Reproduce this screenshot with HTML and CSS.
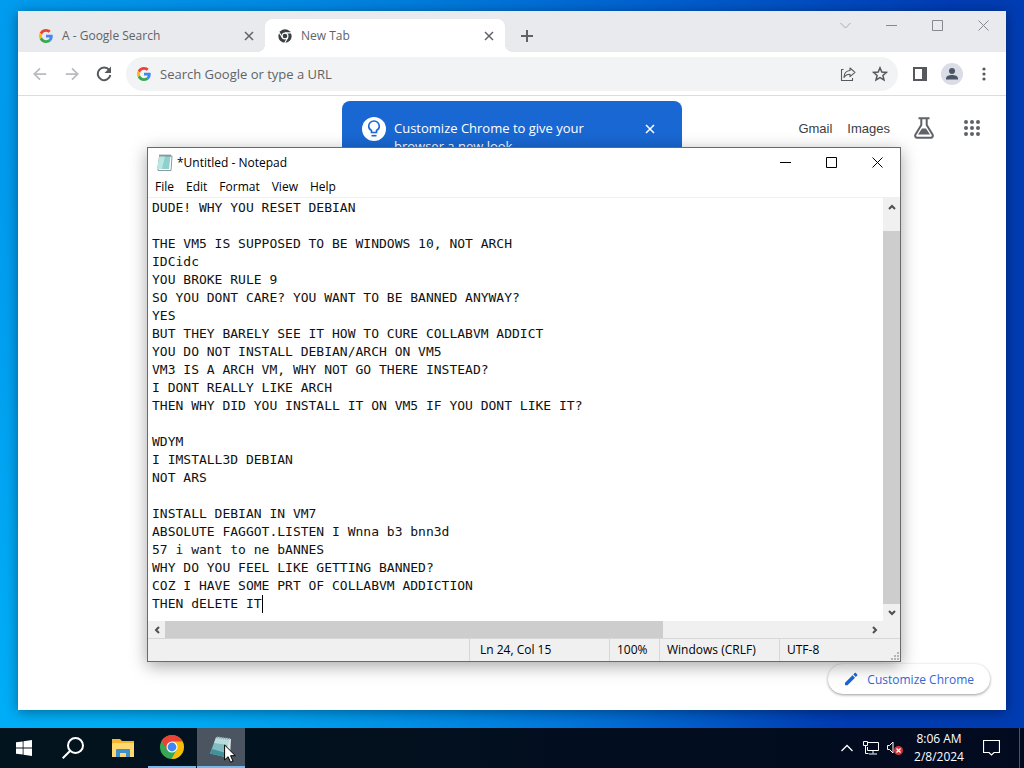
FILE: index.html
```html
<!DOCTYPE html>
<html lang="en">
<head>
  <meta charset="UTF-8" />
  <meta name="viewport" content="width=device-width, initial-scale=1.0" />
  <title>Desktop</title>
  <link rel="stylesheet" href="styles.css">
</head>
<body>

  <svg class="sprite" aria-hidden="true">
    <symbol id="google" viewBox="0 0 48 48">
      <path fill="#EA4335" d="M24 9.5c3.5 0 6.700 1.200 9.200 3.600l6.900-6.900C35.900 2.400 30.500 0 24 0 14.600 0 6.500 5.400 2.600 13.200l8 6.200C12.400 13.700 17.700 9.500 24 9.500z"/>
      <path fill="#4285F4" d="M47 24.600c0-1.600-.2-3.100-.4-4.600H24v9h12.900c-.6 3-2.200 5.500-4.700 7.200l7.700 6C44.400 38 47 31.800 47 24.600z"/>
      <path fill="#FBBC05" d="M10.500 28.600c-.5-1.500-.8-3-.8-4.600s.3-3.100.8-4.600l-8-6.200C.9 16.500 0 20.100 0 24s.9 7.500 2.600 10.800l7.900-6.200z"/>
      <path fill="#34A853" d="M24 48c6.500 0 11.900-2.100 15.900-5.800l-7.700-6c-2.200 1.500-4.900 2.300-8.200 2.300-6.300 0-11.600-4.200-13.500-9.900l-8 6.200C6.500 42.600 14.600 48 24 48z"/>
    </symbol>
    <symbol id="cross" viewBox="0 0 10 10">
      <path d="M1 1l8 8M9 1l-8 8" fill="none" stroke="currentColor" stroke-width="1.500"/>
    </symbol>
    <symbol id="window-close" viewBox="0 0 11 11">
      <path d="M.5.5l10 10M10.500.5l-10 10" fill="none" stroke="currentColor"/>
    </symbol>
    <symbol id="window-max" viewBox="0 0 11 11">
      <path d="M.5.5h10v10H.5z" fill="none" stroke="currentColor"/>
    </symbol>
    <symbol id="window-min" viewBox="0 0 11 11">
      <path d="M0 5.500h11" fill="none" stroke="currentColor"/>
    </symbol>
    <symbol id="chevron" viewBox="0 0 8 6">
      <path d="M1 5l3-3 3 3" fill="none" stroke="currentColor" stroke-width="2"/>
    </symbol>
  </svg>

  <main class="desktop">

    <!-- Chrome -->
    <section class="browser" aria-label="Google Chrome">
      <header class="tab-strip">
        <div class="tab">
          <svg class="favicon" viewBox="0 0 48 48"><use href="#google"/></svg>
          <span class="tab-title">A - Google Search</span>
          <button class="tab-close" aria-label="Close tab"><svg width="10" height="10"><use href="#cross"/></svg></button>
        </div>
        <div class="tab active">
          <svg class="favicon" viewBox="0 0 24 24">
            <circle cx="12" cy="12" r="11.500" fill="#3c4043"/>
            <circle cx="12" cy="12" r="5" fill="none" stroke="#fff" stroke-width="2"/>
            <path d="M12 6.500h11M7.300 14.700L1.800 5.500M16.700 14.700l-5.300 9.300" stroke="#fff" stroke-width="2"/>
          </svg>
          <span class="tab-title">New Tab</span>
          <button class="tab-close" aria-label="Close tab"><svg width="10" height="10"><use href="#cross"/></svg></button>
        </div>
        <button class="new-tab" aria-label="New tab">
          <svg width="12" height="12" viewBox="0 0 12 12"><path d="M6 0v12M0 6h12" stroke="currentColor" stroke-width="2"/></svg>
        </button>
        <div class="window-buttons">
          <button class="search-tabs" aria-label="Search tabs"><svg width="11" height="11" viewBox="0 0 11 11"><path d="M.5 3l5 5 5-5" fill="none" stroke="currentColor"/></svg></button>
          <button aria-label="Minimize"><svg width="11" height="11"><use href="#window-min"/></svg></button>
          <button aria-label="Maximize"><svg width="11" height="11"><use href="#window-max"/></svg></button>
          <button aria-label="Close"><svg width="11" height="11"><use href="#window-close"/></svg></button>
        </div>
      </header>

      <div class="toolbar">
        <button class="tool disabled" aria-label="Back">
          <svg width="14" height="14" viewBox="0 0 16 16"><path d="M15 8H2M8 1.500L1.500 8 8 14.500" fill="none" stroke="currentColor" stroke-width="2"/></svg>
        </button>
        <button class="tool disabled" aria-label="Forward">
          <svg width="14" height="14" viewBox="0 0 16 16"><path d="M1 8h13M8 1.500L14.500 8 8 14.500" fill="none" stroke="currentColor" stroke-width="2"/></svg>
        </button>
        <button class="tool" aria-label="Reload">
          <svg width="16" height="16" viewBox="0 0 16 16"><path d="M13.200 4.200A6.300 6.300 0 1 0 14.300 9" fill="none" stroke="currentColor" stroke-width="2"/><path d="M15 .5V7H8.500z" fill="currentColor"/></svg>
        </button>
        <div class="omnibox">
          <svg class="favicon" viewBox="0 0 48 48"><use href="#google"/></svg>
          <input type="text" aria-label="Address" placeholder="Search Google or type a URL">
          <button class="tool" aria-label="Share">
            <svg width="16" height="16" viewBox="0 0 16 16"><path d="M3.500 3.500H1.500v11h11V12M10 2l5 4.300-5 4.300V8.300C7.500 8.300 5.500 9 4 11.500 4 7.500 6.500 4.800 10 4.500z" fill="none" stroke="currentColor" stroke-width="1.100" stroke-linejoin="round"/></svg>
          </button>
          <button class="tool" aria-label="Bookmark this tab">
            <svg width="16" height="16" viewBox="0 0 16 16"><path d="M8 1.800l1.800 4.200 4.600.4-3.500 3 1.100 4.500-4-2.400-4 2.400 1.100-4.500-3.500-3 4.600-.4z" fill="none" stroke="currentColor" stroke-width="1.500"/></svg>
          </button>
        </div>
        <button class="tool" aria-label="Side panel">
          <svg width="14" height="14" viewBox="0 0 14 14"><path d="M1 1h12v12H1z" fill="none" stroke="currentColor" stroke-width="2"/><path d="M9 0h5v14H9z" fill="currentColor"/></svg>
        </button>
        <button class="tool" aria-label="Profile">
          <svg width="22" height="22" viewBox="0 0 22 22"><circle cx="11" cy="11" r="11" fill="#dadce6"/><circle cx="11" cy="8" r="3" fill="#4c5566"/><path d="M5 16.500v-1c0-2.500 3-3.500 6-3.500s6 1 6 3.500v1z" fill="#4c5566"/></svg>
        </button>
        <button class="tool" aria-label="Menu">
          <svg width="4" height="14" viewBox="0 0 4 14" fill="currentColor"><circle cx="2" cy="2" r="1.600"/><circle cx="2" cy="7" r="1.600"/><circle cx="2" cy="12" r="1.600"/></svg>
        </button>
      </div>

      <div class="page">
        <nav class="page-nav">
          <a href="#">Gmail</a>
          <a href="#">Images</a>
          <a href="#" class="app-link labs" aria-label="Search Labs">
            <svg width="20" height="22" viewBox="0 0 20 22"><path d="M4.500 1.200h11M7.300 1.500V8L1.500 17.500c-.9 1.600 0 3.200 1.800 3.200h13.400c1.800 0 2.700-1.600 1.800-3.200L12.700 8V1.500" fill="none" stroke="currentColor" stroke-width="2"/><path d="M8 11.500h4l4 6H4z" fill="currentColor"/></svg>
          </a>
          <a href="#" class="app-link" aria-label="Google apps">
            <svg width="16" height="16" viewBox="0 0 16 16" fill="currentColor"><circle cx="2" cy="2" r="2"/><circle cx="8" cy="2" r="2"/><circle cx="14" cy="2" r="2"/><circle cx="2" cy="8" r="2"/><circle cx="8" cy="8" r="2"/><circle cx="14" cy="8" r="2"/><circle cx="2" cy="14" r="2"/><circle cx="8" cy="14" r="2"/><circle cx="14" cy="14" r="2"/></svg>
          </a>
        </nav>
        <button class="customize">
          <svg width="14" height="14" viewBox="0 0 14 14" fill="currentColor"><path d="M1 10.700L8.500 3.200l2.500 2.500-7.500 7.500H1zM9.300 2.400l1.400-1.400c.3-.3.800-.3 1.100 0l1.400 1.400c.3.300.3.800 0 1.100l-1.400 1.400z"/></svg>
          Customize Chrome
        </button>
      </div>

      <div class="promo" role="dialog" aria-label="Tip">
        <svg class="promo-icon" viewBox="0 0 24 24"><circle cx="12" cy="12" r="12" fill="#fff"/><path d="M9.500 15.500v-2C7.500 12.500 6.700 11 6.700 9.300a5.300 5.300 0 0 1 10.600 0c0 1.700-.8 3.200-2.800 4.200v2z" fill="none" stroke="#1967d2" stroke-width="1.600"/><path d="M9.500 18.700h5" stroke="#1967d2" stroke-width="1.600"/></svg>
        <p>Customize Chrome to give your browser a new look</p>
        <button aria-label="Close tip"><svg width="10" height="10"><use href="#cross"/></svg></button>
      </div>
    </section>

    <!-- Notepad -->
    <section class="notepad" aria-label="Notepad">
      <header class="title-bar">
        <svg width="17" height="17" viewBox="0 0 17 17">
          <path d="M3.500 2H16l-1 14.500H2z" fill="#fff" stroke="#8a9a9a"/>
          <path d="M3.500 2H14.500L13 15H1z" fill="#8fd0cc"/>
          <path d="M3.500 2H9L6 15H1z" fill="#b8e6e2"/>
          <path d="M3.500 1.500h12" stroke="#50625f" stroke-width="2" stroke-dasharray="1 1"/>
        </svg>
        <h1>*Untitled - Notepad</h1>
        <div class="window-buttons">
          <button aria-label="Minimize"><svg width="11" height="11"><use href="#window-min"/></svg></button>
          <button aria-label="Maximize"><svg width="11" height="11"><use href="#window-max"/></svg></button>
          <button aria-label="Close"><svg width="11" height="11"><use href="#window-close"/></svg></button>
        </div>
      </header>
      <nav class="menu-bar">
        <button>File</button>
        <button>Edit</button>
        <button>Format</button>
        <button>View</button>
        <button>Help</button>
      </nav>
      <div class="editor">
        <div class="text-area">
          <textarea aria-label="Text editor" spellcheck="false" wrap="off">DUDE! WHY YOU RESET DEBIAN

THE VM5 IS SUPPOSED TO BE WINDOWS 10, NOT ARCH
IDCidc
YOU BROKE RULE 9
SO YOU DONT CARE? YOU WANT TO BE BANNED ANYWAY?
YES
BUT THEY BARELY SEE IT HOW TO CURE COLLABVM ADDICT
YOU DO NOT INSTALL DEBIAN/ARCH ON VM5
VM3 IS A ARCH VM, WHY NOT GO THERE INSTEAD?
I DONT REALLY LIKE ARCH
THEN WHY DID YOU INSTALL IT ON VM5 IF YOU DONT LIKE IT?

WDYM
I IMSTALL3D DEBIAN
NOT ARS

INSTALL DEBIAN IN VM7
ABSOLUTE FAGGOT.LISTEN I Wnna b3 bnn3d
57 i want to ne bANNES
WHY DO YOU FEEL LIKE GETTING BANNED?
COZ I HAVE SOME PRT OF COLLABVM ADDICTION
THEN dELETE IT</textarea>
          <span class="caret"></span>
        </div>
        <div class="scrollbar vertical">
          <button aria-label="Scroll up"><svg width="8" height="6"><use href="#chevron"/></svg></button>
          <div class="track"><div class="thumb"></div></div>
          <button class="down" aria-label="Scroll down"><svg width="8" height="6"><use href="#chevron"/></svg></button>
        </div>
        <div class="scrollbar horizontal">
          <button class="left" aria-label="Scroll left"><svg width="8" height="6"><use href="#chevron"/></svg></button>
          <div class="track"><div class="thumb"></div></div>
          <button class="right" aria-label="Scroll right"><svg width="8" height="6"><use href="#chevron"/></svg></button>
        </div>
      </div>
      <footer class="status-bar">
        <span class="position">Ln 24, Col 15</span>
        <span class="zoom">100%</span>
        <span class="endings">Windows (CRLF)</span>
        <span class="encoding">UTF-8</span>
        <svg width="9" height="9" viewBox="0 0 9 9" fill="#b4b4b4"><path d="M6 0h2v2H6zM3 3h2v2H3zM6 3h2v2H6zM0 6h2v2H0zM3 6h2v2H3zM6 6h2v2H6z"/></svg>
      </footer>
    </section>
  </main>

  <!-- Taskbar -->
  <footer class="taskbar">
    <button class="task" aria-label="Start">
      <svg width="16" height="16" viewBox="0 0 16 16" fill="#fff"><path d="M0 2.300l6.700-.9v6.200H0zM7.500 1.300L16 0v7.600H7.500zM0 8.400h6.700v6.200L0 13.700zM7.500 8.400H16V16l-8.500-1.300z"/></svg>
    </button>
    <button class="task search" aria-label="Search">
      <svg width="22" height="22" viewBox="0 0 22 22" fill="none" stroke="#fff" stroke-width="2"><circle cx="13.500" cy="8.500" r="7.500"/><path d="M8 14L.7 21.300"/></svg>
    </button>
    <button class="task" aria-label="File Explorer">
      <svg width="22" height="20" viewBox="0 0 22 20"><path d="M0 1h8l2 2h12v16H0z" fill="#f2b632"/><path d="M1 5h21v14H0V6z" fill="#ffd970"/><path d="M4 19v-7q0-1 1-1h12q1 0 1 1v7h-4v-4H8v4z" fill="#3f8fc9"/></svg>
    </button>
    <button class="task open" aria-label="Google Chrome">
      <svg width="24" height="24" viewBox="0 0 24 24">
        <circle cx="12" cy="12" r="12" fill="#34a853"/>
        <path d="M12 12L1.600 6A12 12 0 0 1 22.400 6z" fill="#ea4335"/>
        <path d="M1.600 6l5.700 9L12 12V6.500z" fill="#ea4335"/>
        <path d="M12 6.500h10.600A12 12 0 0 1 11.500 24l5.200-9.200z" fill="#fbbc05"/>
        <circle cx="12" cy="12" r="5.500" fill="#fff"/>
        <circle cx="12" cy="12" r="4.400" fill="#4285f4"/>
      </svg>
    </button>
    <button class="task open current" aria-label="Notepad">
      <svg width="24" height="22" viewBox="0 0 24 22">
        <path d="M8 1l14 2-1 17-6 1z" fill="#dfe5e5"/>
        <path d="M7 1.500L20 3l-4 18L1 17.500z" fill="#82bcc0"/>
        <path d="M7 1.500L20 3l-1 6L5 7z" fill="#b9dcdd"/>
        <path d="M3 13l14 4-1 4-15-3.500z" fill="#3f9299"/>
        <path d="M8 1.500L21 3" stroke="#9aa5a5" stroke-width="2" stroke-dasharray="1 1"/>
      </svg>
      <svg class="cursor" viewBox="0 0 12 19"><path d="M.6 1v15l3.500-3.300 2.400 5.500 2.500-1.100-2.400-5.400h4.700z" fill="#fff" stroke="#000"/></svg>
    </button>

    <div class="tray">
      <button aria-label="Show hidden icons"><svg width="12" height="8" viewBox="0 0 12 8"><path d="M.5 7L6 1.500 11.500 7" fill="none" stroke="#fff" stroke-width="1.300"/></svg></button>
      <button aria-label="Network"><svg width="16" height="14" viewBox="0 0 16 14" fill="none" stroke="#fff"><path d="M5 1.500h10.500v8h-11V6M10 9.500v3M6 13h8M.5.500h4v4h-4zM2.500 4.500v8h3"/></svg></button>
      <button aria-label="Volume muted"><svg width="16" height="14" viewBox="0 0 16 14"><path d="M.5 4.500h2L6 1v11L2.500 8.500h-2z" fill="none" stroke="#fff"/><circle cx="11.500" cy="9.500" r="4.500" fill="#d13438"/><path d="M9.500 7.500l4 4M13.500 7.500l-4 4" stroke="#fff" stroke-width="1.200"/></svg></button>
      <time class="clock" datetime="2024-02-08T08:06">
        <span>8:06 AM</span>
        <span>2/8/2024</span>
      </time>
      <button class="notifications" aria-label="Notifications"><svg width="17" height="16" viewBox="0 0 17 16"><path d="M.5.500h16v12H11L8.500 15 6 12.500H.5z" fill="none" stroke="#fff" stroke-width="1.200"/></svg></button>
      <button class="show-desktop" aria-label="Show desktop"></button>
    </div>
  </footer>

</body>
</html>
```
FILE: styles.css
```css
/* Global Styles */
* {
  box-sizing: border-box;
  margin: 0;
  padding: 0;
}
body {
  display: flex;
  flex-direction: column;
  height: 100vh;
  overflow: hidden;
  background:
    radial-gradient(ellipse at 10% 100%, rgba(0, 190, 255, 0.7), rgba(0, 190, 255, 0) 55%),
    linear-gradient(98deg, #009cee 0%, #0088e2 28%, #0060d0 58%, #003cb4 84%, #003cb2 100%);
  font-family: "Open Sans", "Noto Sans", sans-serif;
  font-size: 12px;
  color: #000;
}
button {
  display: flex;
  align-items: center;
  justify-content: center;
  border: none;
  background: none;
  font: inherit;
  color: inherit;
}
a {
  color: inherit;
  text-decoration: none;
}
svg {
  display: block;
  flex: none;
}
.sprite {
  position: absolute;
  width: 0;
  height: 0;
}
.desktop {
  position: relative;
  flex: 1;
}
.window-buttons {
  display: flex;
  margin-left: auto;
}
.window-buttons button {
  width: 46px;
  height: 28px;
}

/* Browser */
.browser {
  position: absolute;
  top: 11px;
  right: 18px;
  bottom: 18px;
  left: 18px;
  display: flex;
  flex-direction: column;
  background: #fff;
  box-shadow: 0 2px 12px rgba(0, 0, 0, 0.4);
  color: #5f6368;
}
.tab-strip {
  display: flex;
  height: 41px;
  padding-left: 7px;
  background: #e8eaed;
}
.tab-strip .window-buttons {
  color: #85888d;
}
.tab-strip .search-tabs {
  color: #a5a8ac;
}
.tab {
  position: relative;
  display: flex;
  align-items: center;
  flex: 0 1 240px;
  height: 33px;
  margin-top: 8px;
  padding: 0 10px 0 14px;
  border-radius: 8px 8px 0 0;
}
.tab.active {
  padding-left: 13px;
  background: #fff;
}
.tab.active::before,
.tab.active::after {
  content: "";
  position: absolute;
  bottom: 0;
  width: 8px;
  height: 8px;
}
.tab.active::before {
  right: 100%;
  background: radial-gradient(circle at 0 0, transparent 8px, #fff 8px);
}
.tab.active::after {
  left: 100%;
  background: radial-gradient(circle at 100% 0, transparent 8px, #fff 8px);
}
.favicon {
  width: 14px;
  height: 14px;
}
.tab-title {
  flex: 1;
  margin-left: 9px;
}
.tab-close {
  width: 12px;
  height: 16px;
}
.new-tab {
  width: 44px;
  height: 50px;
}
.toolbar {
  display: flex;
  align-items: center;
  height: 44px;
  padding: 0 6px;
  border-bottom: 1px solid #dadce0;
}
.tool {
  width: 32px;
  height: 32px;
  color: #55585c;
}
.tool.disabled {
  color: #b8babd;
}
.omnibox {
  display: flex;
  align-items: center;
  flex: 1;
  height: 34px;
  margin: 0 6px;
  padding: 0 2px 0 11px;
  border-radius: 17px;
  background: #f1f3f4;
}
.omnibox input {
  flex: 1;
  min-width: 0;
  margin-left: 9px;
  border: none;
  outline: none;
  background: none;
  font: 13px "Open Sans", "Noto Sans", sans-serif;
}
.omnibox input::placeholder {
  color: #5f6368;
}
.page {
  display: flex;
  flex-direction: column;
  align-items: flex-end;
  justify-content: space-between;
  flex: 1;
  padding: 21px 16px 16px;
}
.page-nav {
  display: flex;
  align-items: center;
  gap: 15px;
  padding-right: 10px;
  font: 13px "Liberation Sans", Arial, sans-serif;
  color: #3c4043;
}
.app-link {
  color: #5f6368;
}
.labs {
  margin: 0 15px 0 9px;
}
.customize {
  gap: 9px;
  height: 30px;
  padding: 0 16px;
  border-radius: 15px;
  background: #fff;
  box-shadow: 0 1px 3px rgba(0, 0, 0, 0.4);
  color: #3367d6;
}
.customize svg {
  color: #1967d2;
}
.promo {
  position: absolute;
  top: 90px;
  left: 50%;
  display: flex;
  align-items: flex-start;
  width: 340px;
  height: 90px;
  margin-left: -170px;
  padding: 16px 20px;
  border-radius: 8px;
  background: #1967d2;
  font-size: 13px;
  line-height: 18px;
  color: #fff;
}
.promo-icon {
  width: 24px;
  height: 24px;
}
.promo p {
  width: 210px;
  margin: 2px auto 0 8px;
}
.promo button {
  width: 24px;
  height: 24px;
}

/* Notepad */
.notepad {
  position: absolute;
  top: 147px;
  right: 123px;
  bottom: 66px;
  left: 147px;
  display: flex;
  flex-direction: column;
  border: 1px solid #6a6a6a;
  background: #fff;
  box-shadow: 0 4px 16px rgba(0, 0, 0, 0.35);
}
.title-bar {
  display: flex;
  align-items: center;
  height: 28px;
  padding-left: 8px;
}
.title-bar h1 {
  margin-left: 4px;
  font-size: 12px;
  font-weight: normal;
}
.menu-bar {
  display: flex;
  height: 22px;
  padding-left: 1px;
  border-bottom: 1px solid #f0f0f0;
}
.menu-bar button {
  padding: 0 6px;
}
.editor {
  display: grid;
  grid-template-columns: 1fr 17px;
  grid-template-rows: 1fr 17px;
  flex: 1;
  background: #f0f0f0;
}
.text-area {
  position: relative;
  overflow: hidden;
  background: #fff;
  font: 13px/18px "DejaVu Sans Mono", monospace;
}
.text-area textarea {
  display: block;
  width: 100%;
  height: 100%;
  padding: 1px 4px 0;
  border: none;
  outline: none;
  overflow: hidden;
  resize: none;
  background: none;
  font: inherit;
  color: #111;
}
.caret {
  position: absolute;
  top: calc(1px + 22 * 18px);
  left: calc(4px + 14ch);
  width: 1px;
  height: 18px;
  background: #000;
}
.scrollbar {
  display: flex;
  color: #505050;
}
.scrollbar.vertical {
  flex-direction: column;
}
.scrollbar button {
  width: 17px;
  height: 17px;
}
.track {
  display: flex;
  flex: 1;
}
.thumb {
  background: #cdcdcd;
}
.horizontal .thumb {
  width: 71%;
}
.vertical .track {
  align-items: flex-end;
}
.vertical .thumb {
  width: 100%;
  height: 96%;
}
.down svg {
  transform: rotate(180deg);
}
.left svg {
  transform: rotate(-90deg);
}
.right svg {
  transform: rotate(90deg);
}
.status-bar {
  display: flex;
  justify-content: flex-end;
  align-items: flex-end;
  height: 23px;
  border-top: 1px solid #d7d7d7;
  background: #f0f0f0;
  line-height: 22px;
}
.status-bar span {
  padding-left: 7px;
  border-left: 1px solid #d7d7d7;
}
.status-bar .position {
  width: 140px;
  padding-left: 10px;
}
.status-bar .zoom {
  width: 50px;
}
.status-bar .endings {
  width: 120px;
}
.status-bar .encoding {
  width: 112px;
}

/* Taskbar */
.taskbar {
  display: flex;
  height: 40px;
  background: linear-gradient(to right, #02141e, #020a20);
  color: #fff;
}
.task {
  position: relative;
  width: 48px;
  margin-right: 1px;
}
.task.search {
  margin-right: 2px;
}
.task.open {
  border-bottom: 2px solid #76b9ed;
}
.task.current {
  background: #4a5561;
}
.cursor {
  position: absolute;
  top: 16px;
  left: 27px;
  width: 12px;
  height: 19px;
}
.tray {
  display: flex;
  align-items: center;
  margin-left: auto;
}
.tray button {
  width: 24px;
  height: 40px;
}
.clock {
  display: flex;
  flex-direction: column;
  width: 64px;
  text-align: center;
  line-height: 18px;
}
.tray .notifications {
  width: 40px;
  margin-right: 8px;
}
.tray .show-desktop {
  width: 5px;
  border-left: 1px solid #4a5561;
}
```
